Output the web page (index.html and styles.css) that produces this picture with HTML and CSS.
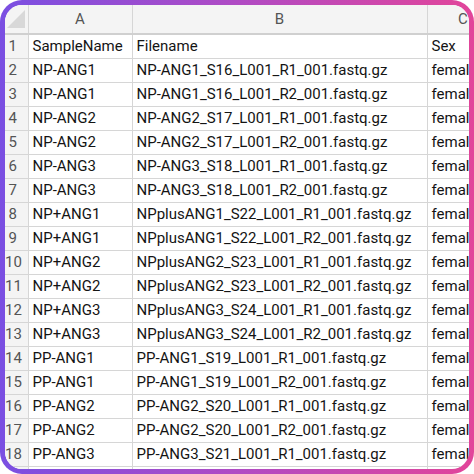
FILE: index.html
```html
<!DOCTYPE html>
<html>
<head>
<meta charset="utf-8">
<link rel="stylesheet" href="styles.css">
</head>
<body>
<div class="frame">
  <div class="sheet">
    <table class="grid">
      <colgroup>
        <col class="c-num"><col class="c-a"><col class="c-b"><col class="c-c">
      </colgroup>
      <thead>
        <tr class="head">
          <th class="corner"><span class="tri"></span></th>
          <th>A</th><th>B</th><th>C</th>
        </tr>
      </thead>
      <tbody>
        <tr><th>1</th><td>SampleName</td><td>Filename</td><td>Sex</td></tr>
        <tr><th>2</th><td>NP-ANG1</td><td>NP-ANG1_S16_L001_R1_001.fastq.gz</td><td>female</td></tr>
        <tr><th>3</th><td>NP-ANG1</td><td>NP-ANG1_S16_L001_R2_001.fastq.gz</td><td>female</td></tr>
        <tr><th>4</th><td>NP-ANG2</td><td>NP-ANG2_S17_L001_R1_001.fastq.gz</td><td>female</td></tr>
        <tr><th>5</th><td>NP-ANG2</td><td>NP-ANG2_S17_L001_R2_001.fastq.gz</td><td>female</td></tr>
        <tr><th>6</th><td>NP-ANG3</td><td>NP-ANG3_S18_L001_R1_001.fastq.gz</td><td>female</td></tr>
        <tr><th>7</th><td>NP-ANG3</td><td>NP-ANG3_S18_L001_R2_001.fastq.gz</td><td>female</td></tr>
        <tr><th>8</th><td>NP+ANG1</td><td>NPplusANG1_S22_L001_R1_001.fastq.gz</td><td>female</td></tr>
        <tr><th>9</th><td>NP+ANG1</td><td>NPplusANG1_S22_L001_R2_001.fastq.gz</td><td>female</td></tr>
        <tr><th>10</th><td>NP+ANG2</td><td>NPplusANG2_S23_L001_R1_001.fastq.gz</td><td>female</td></tr>
        <tr><th>11</th><td>NP+ANG2</td><td>NPplusANG2_S23_L001_R2_001.fastq.gz</td><td>female</td></tr>
        <tr><th>12</th><td>NP+ANG3</td><td>NPplusANG3_S24_L001_R1_001.fastq.gz</td><td>female</td></tr>
        <tr><th>13</th><td>NP+ANG3</td><td>NPplusANG3_S24_L001_R2_001.fastq.gz</td><td>female</td></tr>
        <tr><th>14</th><td>PP-ANG1</td><td>PP-ANG1_S19_L001_R1_001.fastq.gz</td><td>female</td></tr>
        <tr><th>15</th><td>PP-ANG1</td><td>PP-ANG1_S19_L001_R2_001.fastq.gz</td><td>female</td></tr>
        <tr><th>16</th><td>PP-ANG2</td><td>PP-ANG2_S20_L001_R1_001.fastq.gz</td><td>female</td></tr>
        <tr><th>17</th><td>PP-ANG2</td><td>PP-ANG2_S20_L001_R2_001.fastq.gz</td><td>female</td></tr>
        <tr><th>18</th><td>PP-ANG3</td><td>PP-ANG3_S21_L001_R1_001.fastq.gz</td><td>female</td></tr>
        <tr><th>19</th><td>PP-ANG3</td><td>PP-ANG3_S21_L001_R2_001.fastq.gz</td><td>female</td></tr>
      </tbody>
    </table>
  </div>
</div>
</body>
</html>
```
FILE: styles.css
```css
html, body {
  margin: 0;
  padding: 0;
  background: #ffffff;
}
.frame {
  width: 474px;
  height: 474px;
  box-sizing: border-box;
  padding: 5px;
  border-radius: 22px;
  background: linear-gradient(90deg, #7a4fe2 0%, #b04bc4 50%, #e2459a 100%);
}
.sheet {
  width: 100%;
  height: 100%;
  background: #ffffff;
  border-radius: 17px;
  overflow: hidden;
}
.grid {
  border-collapse: collapse;
  table-layout: fixed;
  width: 494px;
  font-family: Roboto, "Liberation Sans", sans-serif;
  font-size: 15px;
  color: #141414;
}
.c-num { width: 23px; }
.c-a { width: 104px; }
.c-b { width: 295px; }
.c-c { width: 72px; }
.grid th, .grid td {
  height: 24px;
  padding: 0;
  border-right: 1px solid #d6d6d6;
  border-bottom: 1px solid #d6d6d6;
  white-space: nowrap;
  overflow: hidden;
  text-overflow: clip;
  box-sizing: border-box;
  line-height: 23px;
}
.grid td {
  padding-left: 4px;
  text-align: left;
}
.grid tbody th {
  font-weight: 400;
  color: #555555;
  background: #f4f4f4;
  text-align: center;
  padding-right: 7px;
}
.head th {
  height: 29px;
  font-weight: 400;
  color: #555555;
  background: #f4f4f4;
  text-align: center;
  border-bottom: 2px solid #d0d0d0;
}
.corner {
  position: relative;
}
.tri {
  position: absolute;
  right: 3px;
  bottom: 5px;
  width: 0;
  height: 0;
  border-left: 18px solid transparent;
  border-bottom: 18px solid #d8d8d8;
}
```
